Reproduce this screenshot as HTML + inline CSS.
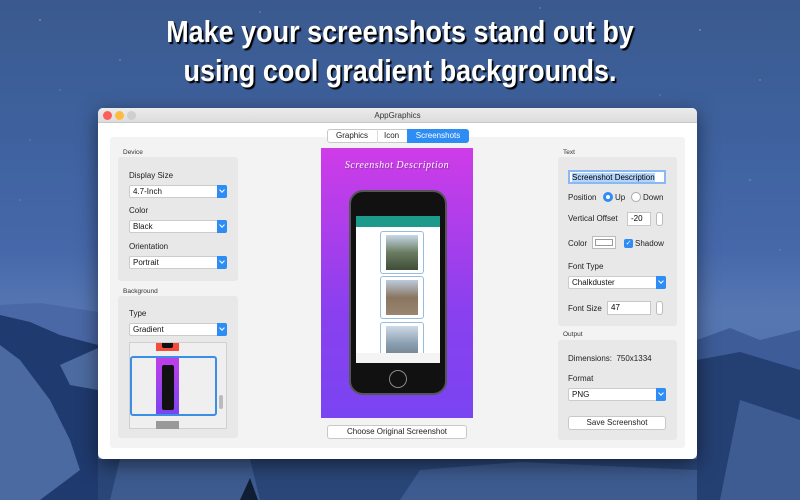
<!DOCTYPE html>
<html><head><meta charset="utf-8"><style>
*{margin:0;padding:0;box-sizing:border-box}
body{width:800px;height:500px;overflow:hidden;position:relative;font-family:"Liberation Sans",sans-serif;
background:linear-gradient(180deg,#3a5a8e 0%,#3f62a0 30%,#4668aa 50%,#5676b2 62%,#5070ac 100%)}
.h{position:absolute;left:0;width:800px;text-align:center;color:#fff;font-size:31px;font-weight:bold;
text-shadow:2px 2px 1px #000;transform:scaleX(0.87);transform-origin:400px 0}
.mtn{position:absolute;left:0;top:0}
.win{position:absolute;left:98px;top:108px;width:599px;height:351px;background:#fff;border-radius:5px;box-shadow:0 6px 20px rgba(0,0,0,.5)}
.tb{height:15px;background:linear-gradient(#ececec,#dcdcdc);border-radius:5px 5px 0 0;border-bottom:1px solid #c8c8c8;font-size:8px;text-align:center;line-height:15px;color:#333}
.dot{position:absolute;top:3px;width:9px;height:9px;border-radius:50%}
.inner{position:absolute;left:12px;top:29px;width:575px;height:311px;background:#f3f3f3;border-radius:3px}
.a{position:absolute;font-size:8px;color:#222}
.panel{position:absolute;background:#e8e8e8;border-radius:3px}
.lbl{position:absolute;font-size:6.5px;color:#333}
.sel{position:absolute;height:13px;background:#fff;border:1px solid #ccc;font-size:8px;line-height:11px;padding-left:3px;color:#111;border-radius:2px}
.sel i{position:absolute;right:-1px;top:-1px;width:10px;height:13px;background:#2e8cf5;border-radius:0 2px 2px 0}
.sel i:after{content:"";position:absolute;left:3px;top:3px;width:3px;height:3px;border-right:1px solid #fff;border-bottom:1px solid #fff;transform:rotate(45deg)}
.btn{position:absolute;height:14px;background:#fff;border:1px solid #c8c8c8;border-radius:3px;font-size:8px;text-align:center;line-height:12px;color:#222}
.inp{position:absolute;height:14px;background:#fff;border:1px solid #c8c8c8;font-size:8px;line-height:12px;padding-left:3px}
.step{position:absolute;width:7px;height:14px;border:1px solid #bbb;border-radius:3px;background:#fff}
.photo{position:absolute;left:56px;width:44px;border:1px solid #9bd;border-radius:3px;background:#fff}
.photo div{margin:3px 5px;height:35px}
</style></head><body>
<svg class="mtn" width="800" height="500">
<g fill="#fff" opacity=".5">
<circle cx="40" cy="20" r=".7"/><circle cx="120" cy="60" r=".6"/><circle cx="260" cy="12" r=".6"/><circle cx="700" cy="30" r=".7"/><circle cx="760" cy="80" r=".6"/><circle cx="60" cy="90" r=".5"/><circle cx="540" cy="8" r=".6"/><circle cx="660" cy="95" r=".5"/><circle cx="20" cy="200" r=".5"/><circle cx="750" cy="180" r=".6"/><circle cx="30" cy="140" r=".5"/><circle cx="780" cy="250" r=".5"/>
</g>
<path d="M0 305 L15 304 L40 303 L60 306 L98 312 L98 500 L0 500Z" fill="#4a68a6"/>
<path d="M0 315 L30 322 L60 335 L98 345 L98 500 L0 500Z" fill="#1f3a6e"/>
<path d="M0 345 L20 360 L50 400 L70 440 L80 470 L40 500 L0 500Z" fill="#4b6aa2"/>
<path d="M60 365 L98 348 L98 390 L70 385Z" fill="#4d6ba0"/>
<path d="M697 340 L730 328 L760 340 L800 330 L800 500 L697 500Z" fill="#3d5c98"/>
<path d="M697 360 L740 352 L800 370 L800 500 L697 500Z" fill="#243f72"/>
<path d="M740 400 L800 420 L800 500 L720 500Z" fill="#3e5c92"/>
<path d="M98 459 L697 459 L697 500 L98 500Z" fill="#2a4678"/>
<path d="M120 459 L250 459 L260 500 L110 500Z M420 470 L520 462 L697 470 L697 500 L400 500Z" fill="#3e5b90"/>
<path d="M240 500 L250 478 L258 500Z" fill="#111d33"/>
</svg>
<div class="h" style="top:14px">Make your screenshots stand out by</div>
<div class="h" style="top:53px">using cool gradient backgrounds.</div>
<div class="win">
<div class="tb">AppGraphics</div>
<div class="dot" style="left:5px;background:#fc605b"></div>
<div class="dot" style="left:17px;background:#fdbc40"></div>
<div class="dot" style="left:29px;background:#cfcfcf"></div>
<div class="inner"></div>
<div style="position:absolute;left:229px;top:21px;width:141px;height:14px;background:#fff;border:1px solid #c8c8c8;border-radius:3px;font-size:8px;line-height:12px;color:#222">
<span style="position:absolute;left:8px">Graphics</span><span style="position:absolute;left:49px;top:-1px;height:14px;border-left:1px solid #ddd"></span>
<span style="position:absolute;left:56px">Icon</span>
<span style="position:absolute;left:79px;top:-1px;width:62px;height:14px;background:#2e8cf5;color:#fff;text-align:center;line-height:14px;border-radius:0 3px 3px 0">Screenshots</span></div>
<div class="lbl" style="left:25px;top:41px">Device</div>
<div class="panel" style="left:20px;top:49px;width:120px;height:124px"></div>
<div class="a" style="left:31px;top:63px">Display Size</div>
<div class="sel" style="left:31px;top:77px;width:98px">4.7-Inch<i></i></div>
<div class="a" style="left:31px;top:98px">Color</div>
<div class="sel" style="left:31px;top:112px;width:98px">Black<i></i></div>
<div class="a" style="left:31px;top:134px">Orientation</div>
<div class="sel" style="left:31px;top:148px;width:98px">Portrait<i></i></div>
<div class="lbl" style="left:25px;top:180px">Background</div>
<div class="panel" style="left:20px;top:188px;width:120px;height:142px"></div>
<div class="a" style="left:31px;top:201px">Type</div>
<div class="sel" style="left:31px;top:215px;width:98px">Gradient<i></i></div>
<div style="position:absolute;left:31px;top:234px;width:98px;height:87px;background:#efefef;border:1px solid #d0d0d0">
<div style="position:absolute;left:26px;top:0;width:23px;height:8px;background:#f44b3c"></div>
<div style="position:absolute;left:32px;top:0;width:11px;height:5px;background:#111;border-radius:0 0 2px 2px"></div>
<div style="position:absolute;left:0;top:13px;width:87px;height:60px;border:2px solid #3a8ee6;border-radius:3px"></div>
<div style="position:absolute;left:26px;top:15px;width:23px;height:56px;background:linear-gradient(#c03ee8,#7a45f0)"></div>
<div style="position:absolute;left:32px;top:22px;width:12px;height:45px;background:#111;border-radius:2px"></div>
<div style="position:absolute;left:26px;top:78px;width:23px;height:8px;background:#999"></div>
<div style="position:absolute;left:89px;top:52px;width:4px;height:14px;background:#bbb;border-radius:2px"></div>
</div>
<div style="position:absolute;left:223px;top:40px;width:152px;height:270px;background:linear-gradient(#cf3ce8,#8a40ee 60%,#7a44f2)">
<div style="position:absolute;top:12px;width:152px;text-align:center;color:#fff;font-family:'Liberation Serif',serif;font-style:italic;font-size:10px;letter-spacing:.5px;text-shadow:1px 1px 1px rgba(0,0,0,.3)">Screenshot Description</div>
<div style="position:absolute;left:28px;top:42px;width:98px;height:205px;background:#111;border-radius:14px;border:2px solid #555">
<div style="position:absolute;left:5px;top:24px;width:84px;height:147px;background:#fff;overflow:hidden">
<div style="height:11px;background:#1e9a8c"></div>
<div class="photo" style="left:24px;top:15px"><div style="background:linear-gradient(#c8d8e8,#6a7c60 50%,#3e4e38)"></div></div>
<div class="photo" style="left:24px;top:60px"><div style="background:linear-gradient(#bcd,#8a7560 50%,#9a8670)"></div></div>
<div class="photo" style="left:24px;top:106px"><div style="background:linear-gradient(#cfd9e6,#8aa0b0 50%,#6b7480)"></div></div>
<div style="position:absolute;bottom:0;left:0;width:84px;height:10px;background:#f4f4f4"></div>
</div>
<div style="position:absolute;left:38px;top:178px;width:18px;height:18px;border:1px solid #888;border-radius:50%"></div>
</div></div>
<div class="btn" style="left:229px;top:317px;width:140px">Choose Original Screenshot</div>
<div class="lbl" style="left:465px;top:41px">Text</div>
<div class="panel" style="left:460px;top:49px;width:119px;height:169px"></div>
<div class="inp" style="left:470px;top:62px;width:98px;border:2px solid #8ab8f0;padding-left:2px"><span style="background:#b3d4fb">Screenshot Description</span></div>
<div class="a" style="left:470px;top:85px">Position</div>
<div style="position:absolute;left:505px;top:84px;width:10px;height:10px;border-radius:50%;background:#2e8cf5"><div style="margin:3px;width:4px;height:4px;border-radius:50%;background:#fff"></div></div>
<div class="a" style="left:517px;top:85px">Up</div>
<div style="position:absolute;left:533px;top:84px;width:10px;height:10px;border-radius:50%;background:#fff;border:1px solid #aaa"></div>
<div class="a" style="left:545px;top:85px">Down</div>
<div class="a" style="left:470px;top:106px">Vertical Offset</div>
<div class="inp" style="left:529px;top:104px;width:24px">-20</div>
<div class="step" style="left:558px;top:104px"></div>
<div class="a" style="left:470px;top:131px">Color</div>
<div style="position:absolute;left:494px;top:128px;width:24px;height:13px;border:1px solid #bbb;background:#fff;padding:2px"><div style="border:1px solid #999;height:7px"></div></div>
<div style="position:absolute;left:526px;top:131px;width:9px;height:9px;background:#2e8cf5;border-radius:2px;color:#fff;font-size:7px;line-height:9px;text-align:center">✓</div>
<div class="a" style="left:537px;top:131px">Shadow</div>
<div class="a" style="left:470px;top:154px">Font Type</div>
<div class="sel" style="left:470px;top:168px;width:98px">Chalkduster<i></i></div>
<div class="a" style="left:470px;top:196px">Font Size</div>
<div class="inp" style="left:509px;top:193px;width:44px">47</div>
<div class="step" style="left:558px;top:193px"></div>
<div class="lbl" style="left:465px;top:223px">Output</div>
<div class="panel" style="left:460px;top:232px;width:119px;height:100px"></div>
<div class="a" style="left:470px;top:246px">Dimensions:&nbsp; 750x1334</div>
<div class="a" style="left:470px;top:266px">Format</div>
<div class="sel" style="left:470px;top:280px;width:98px">PNG<i></i></div>
<div class="btn" style="left:470px;top:308px;width:98px">Save Screenshot</div>
</div>
</body></html>
